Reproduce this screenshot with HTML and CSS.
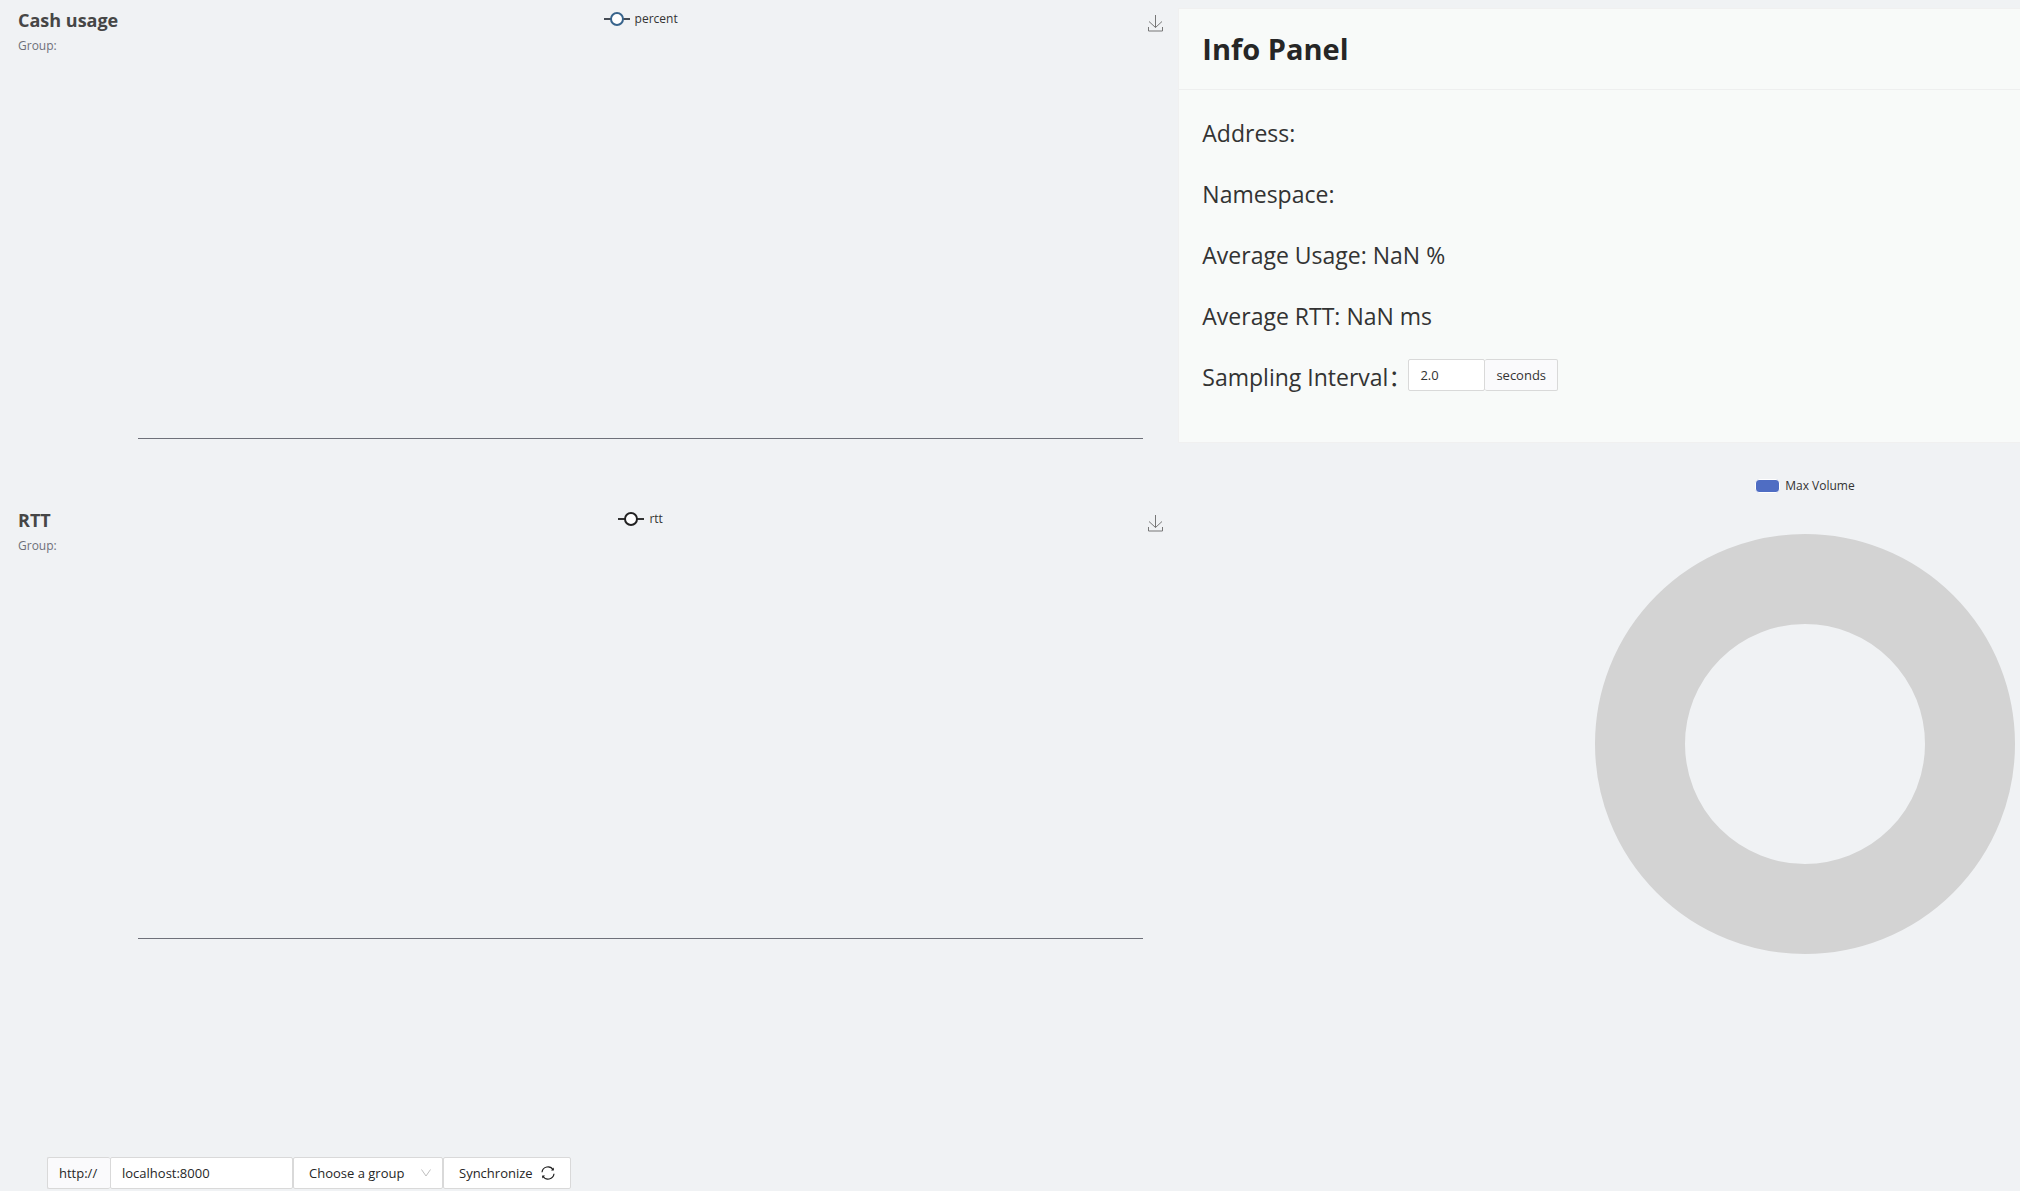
FILE: index.html
```html
<!DOCTYPE html>
<html lang="en">
<head>
<meta charset="utf-8">
<title>Cache monitor</title>
<link rel="stylesheet" href="styles.css">
</head>
<body>
<main class="dashboard">
  <div class="charts">
    <section class="chart">
      <header class="chart-head">
        <div>
          <h2 class="chart-title">Cash usage</h2>
          <p class="chart-subtitle">Group:</p>
        </div>
        <div class="legend">
          <svg class="legend-line" width="26" height="14" viewBox="0 0 26 14" aria-hidden="true"><path d="M0 7h26" stroke="#464c54" stroke-width="2"/><circle cx="13" cy="7" r="6" fill="#fff" stroke="#38648c" stroke-width="2"/></svg>
          <span>percent</span>
        </div>
        <button class="download" type="button" aria-label="Save as image"><svg width="15" height="17" viewBox="0 0 15 17" fill="none" stroke="#777"><path d="M7.500 0v12.500M1 6.500l6.500 6 6.500-6M.5 12v4h14v-4"/></svg></button>
      </header>
      <div class="plot"></div>
    </section>
    <section class="chart">
      <header class="chart-head">
        <div>
          <h2 class="chart-title">RTT</h2>
          <p class="chart-subtitle">Group:</p>
        </div>
        <div class="legend">
          <svg class="legend-line" width="26" height="14" viewBox="0 0 26 14" aria-hidden="true"><path d="M0 7h26" stroke="#333" stroke-width="2"/><circle cx="13" cy="7" r="6" fill="#fff" stroke="#222" stroke-width="2"/></svg>
          <span>rtt</span>
        </div>
        <button class="download" type="button" aria-label="Save as image"><svg width="15" height="17" viewBox="0 0 15 17" fill="none" stroke="#777"><path d="M7.500 0v12.500M1 6.500l6.500 6 6.500-6M.5 12v4h14v-4"/></svg></button>
      </header>
      <div class="plot"></div>
    </section>
  </div>
  <div class="side">
    <section class="card">
      <h1 class="card-title">Info Panel</h1>
      <div class="card-body">
        <p class="info">Address:</p>
        <p class="info">Namespace:</p>
        <p class="info">Average Usage: NaN %</p>
        <p class="info">Average RTT: NaN ms</p>
        <div class="info info-row">
          <label class="interval-label" for="interval">Sampling Interval：</label>
          <div class="group">
            <input class="field interval" id="interval" type="text" value="2.0">
            <span class="addon">seconds</span>
          </div>
        </div>
      </div>
    </section>
    <section class="volume">
      <div class="legend volume-legend"><span class="swatch"></span><span>Max Volume</span></div>
      <svg class="ring" viewBox="0 0 420 420" role="img" aria-label="Max Volume"><circle cx="210" cy="210" r="165" fill="none" stroke="#d3d3d3" stroke-width="90"/></svg>
    </section>
  </div>
</main>
<form class="toolbar">
  <label class="addon" for="host">http://</label>
  <input class="field host" id="host" type="text" value="localhost:8000">
  <div class="picker">
    <select class="field choose" aria-label="Group"><option>Choose a group</option></select>
    <svg class="chevron" width="10" height="8" viewBox="0 0 10 8" fill="none" stroke="#bfbfbf" aria-hidden="true"><path d="M.5.5L5 7 9.500.5"/></svg>
  </div>
  <button class="sync" type="button">Synchronize
    <svg width="14" height="14" viewBox="0 0 14 14" fill="none" stroke="#222" stroke-width="1.200" aria-hidden="true"><path d="M1 6.200A6 6 0 0 1 12.200 4M13 7.800A6 6 0 0 1 1.800 10"/><path d="M12.800 1.500V4.600H10zM1.200 12.500V9.400H4z" fill="#222" stroke="none"/></svg>
  </button>
</form>
</body>
</html>
```
FILE: styles.css
```css
* {
  box-sizing: border-box;
}

body {
  margin: 0;
  background: #f0f2f4;
  color: #262626;
  font: 14px/22px "Open Sans", "Noto Sans", "Noto Sans CJK SC", sans-serif;
}

h1, h2, p {
  margin: 0;
}

input, select, button {
  font: inherit;
  color: inherit;
}

.dashboard {
  display: grid;
  grid-template-columns: 7fr 5fr;
}

.chart {
  display: flex;
  flex-direction: column;
  height: 500px;
  padding: 8px 15px 61px 18px;
}

.chart-head {
  display: grid;
  grid-template-columns: 120px 1fr 20px;
}

.chart-title {
  color: #464646;
  font-size: 18px;
  line-height: 24px;
  font-weight: 700;
}

.chart-subtitle {
  padding-top: 4px;
  color: #6e7079;
  font-size: 12px;
  line-height: 20px;
}

.legend {
  display: flex;
  justify-content: center;
  align-items: center;
  align-self: start;
  gap: 5px;
  color: #333;
  font-size: 12px;
  line-height: 20px;
}

.legend > * {
  display: block;
}

.chart-head .legend {
  padding-top: 1px;
}

.download {
  align-self: start;
  justify-self: end;
  padding: 7px 0 0;
  border: 0;
  background: none;
  line-height: 0;
}

.plot {
  flex: 1;
  margin: 0 20px 0 120px;
  border-bottom: 1px solid #6e7079;
}

.card {
  margin-top: 8px;
  border: 1px solid #f0f0f0;
  border-right: 0;
  background: #f8faf9;
}

.card-title {
  padding: 16px 23px;
  border-bottom: 1px solid #eeefef;
  font-size: 29px;
  line-height: 48px;
  font-weight: 700;
}

.card-body {
  padding: 25px 23px 22px;
}

.info {
  margin-bottom: 24px;
  color: #333;
  font-size: 23px;
  line-height: 37px;
}

.info-row {
  display: flex;
  align-items: flex-start;
}

.interval-label {
  margin-right: -3px;
}

.group {
  display: flex;
  font-size: 14px;
}

.field,
.addon,
.sync {
  height: 32px;
  border: 1px solid #d9d9d9;
  border-radius: 2px;
  background: #fff;
  font-size: 13px;
  line-height: 30px;
}

.field {
  padding: 0 11px;
}

.addon {
  padding: 0 11px;
  background: #fafafc;
}

.interval {
  width: 77px;
}

.interval + .addon {
  border-left: 0;
}

.volume {
  width: 430px;
  margin-left: auto;
  padding: 33px 5px 0;
}

.swatch {
  width: 25px;
  height: 14px;
  border: 1px solid #fff;
  border-radius: 4px;
  background: #4f6dc3;
}

.ring {
  display: block;
  width: 100%;
  margin-top: 38px;
}

.toolbar {
  display: flex;
  margin: 157px 0 0 47px;
}

.toolbar .addon {
  width: 63px;
  border-right: 0;
}

.host {
  width: 183px;
}

.picker {
  position: relative;
}

.choose {
  width: 150px;
  padding: 0 15px;
  appearance: none;
}

.chevron {
  position: absolute;
  top: 12px;
  right: 12px;
}

.sync {
  display: flex;
  align-items: center;
  gap: 8px;
  padding: 0 15px;
}
```
